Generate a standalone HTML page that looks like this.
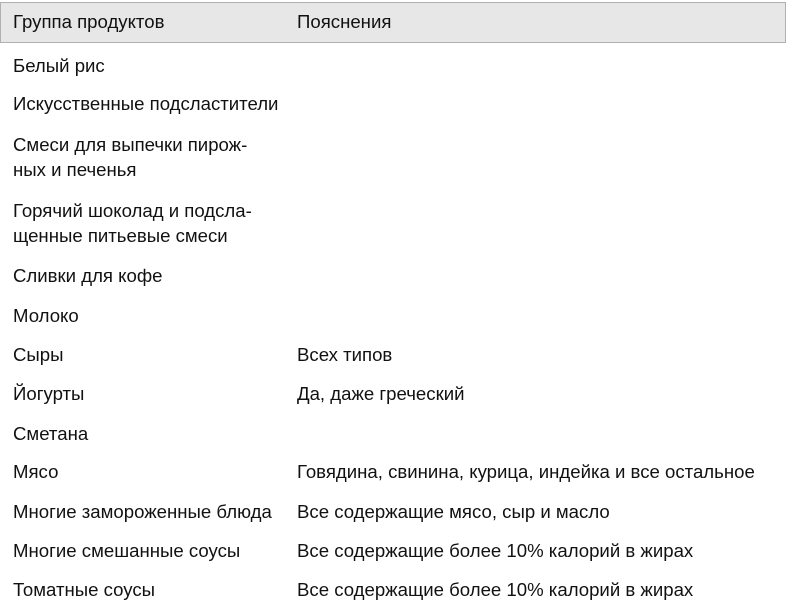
<!DOCTYPE html>
<html><head><meta charset="utf-8"><style>
body{margin:0;width:790px;height:602px;background:#fff;position:relative;overflow:hidden;font-family:"Liberation Sans",sans-serif;font-size:18.6px;color:#111}
.h{position:absolute;left:0;top:2px;width:784px;height:39px;background:#e7e7e7;border:1px solid #b0b0b0}
.t{position:absolute;white-space:nowrap;line-height:20px}
.a{left:13px}.b{left:297px}
</style></head><body>
<div class="h"></div>
<div class="t a" style="top:12px">Группа продуктов</div>
<div class="t b" style="top:12px">Пояснения</div>
<div class="t a" style="top:56px">Белый рис</div>
<div class="t a" style="top:94px">Искусственные подсластители</div>
<div class="t a" style="top:135px">Смеси для выпечки пирож-</div>
<div class="t a" style="top:160px">ных и печенья</div>
<div class="t a" style="top:201px">Горячий шоколад и подсла-</div>
<div class="t a" style="top:226px">щенные питьевые смеси</div>
<div class="t a" style="top:266px">Сливки для кофе</div>
<div class="t a" style="top:306px">Молоко</div>
<div class="t a" style="top:345px">Сыры</div>
<div class="t b" style="top:345px">Всех типов</div>
<div class="t a" style="top:384px">Йогурты</div>
<div class="t b" style="top:384px">Да, даже греческий</div>
<div class="t a" style="top:424px">Сметана</div>
<div class="t a" style="top:462px">Мясо</div>
<div class="t b" style="top:462px">Говядина, свинина, курица, индейка и все остальное</div>
<div class="t a" style="top:502px">Многие замороженные блюда</div>
<div class="t b" style="top:502px">Все содержащие мясо, сыр и масло</div>
<div class="t a" style="top:541px">Многие смешанные соусы</div>
<div class="t b" style="top:541px">Все содержащие более 10% калорий в жирах</div>
<div class="t a" style="top:580px">Томатные соусы</div>
<div class="t b" style="top:580px">Все содержащие более 10% калорий в жирах</div>
</body></html>
